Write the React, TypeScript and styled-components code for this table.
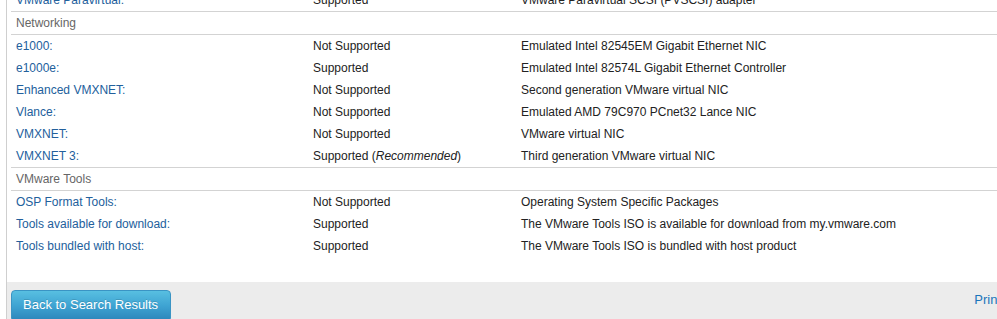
import React from "react";
import styled, { createGlobalStyle } from "styled-components";

const GlobalStyle = createGlobalStyle`
  html, body {
    margin: 0;
    padding: 0;
    background: #fff;
    overflow: hidden;
    font-family: "Liberation Sans", Arial, sans-serif;
  }
`;

const Page = styled.div`
  width: 1010px;
  height: 319px;
  padding-left: 6px;
  overflow: hidden;
`;

const Panel = styled.div`
  border-left: 1px solid #cfcfcf;
  background: #fff;
  display: flex;
  flex-direction: column;
  height: 100%;
`;

const Table = styled.div`
  margin: -11px 0 25px 4px;
  display: flex;
  flex-direction: column;
`;

const Row = styled.div`
  display: grid;
  grid-template-columns: 297px 208px 1fr;
  height: 22px;
  align-items: center;
  font-size: 12px;
  white-space: nowrap;
`;

const Label = styled.span`
  padding-left: 5px;
  color: #22609c;
`;

const Value = styled.span`
  padding-left: 5px;
  color: #222;
`;

const SectionRow = styled.div`
  height: 22px;
  display: flex;
  align-items: center;
  padding-left: 5px;
  font-size: 12px;
  color: #666;
  border-top: 1px solid #d3d3d3;
  border-bottom: 1px solid #d3d3d3;
`;

const Footer = styled.div`
  flex: 1;
  background: #ececec;
  display: flex;
  justify-content: space-between;
  align-items: flex-start;
  padding: 8px 15px 0 4px;
`;

const BackButton = styled.button`
  font-family: "Liberation Sans", Arial, sans-serif;
  font-size: 13px;
  color: #fff;
  height: 32px;
  padding: 0 12px 4px 11px;
  border: 1px solid #3a94c4;
  border-radius: 4px;
  background: linear-gradient(to bottom, #58bfe1 0%, #3ea3d2 50%, #2b84b9 100%);
  text-shadow: 0 -1px 0 rgba(0, 0, 0, 0.15);
  cursor: pointer;
`;

const PrintLink = styled.a`
  font-size: 13px;
  color: #1a75bb;
  margin-top: 2px;
  text-decoration: none;
`;

type Item = { label: string; support: React.ReactNode; desc: string };

const networking: Item[] = [
  { label: "e1000:", support: "Not Supported", desc: "Emulated Intel 82545EM Gigabit Ethernet NIC" },
  { label: "e1000e:", support: "Supported", desc: "Emulated Intel 82574L Gigabit Ethernet Controller" },
  { label: "Enhanced VMXNET:", support: "Not Supported", desc: "Second generation VMware virtual NIC" },
  { label: "Vlance:", support: "Not Supported", desc: "Emulated AMD 79C970 PCnet32 Lance NIC" },
  { label: "VMXNET:", support: "Not Supported", desc: "VMware virtual NIC" },
  {
    label: "VMXNET 3:",
    support: (
      <>
        Supported (<i>Recommended</i>)
      </>
    ),
    desc: "Third generation VMware virtual NIC",
  },
];

const tools: Item[] = [
  { label: "OSP Format Tools:", support: "Not Supported", desc: "Operating System Specific Packages" },
  {
    label: "Tools available for download:",
    support: "Supported",
    desc: "The VMware Tools ISO is available for download from my.vmware.com",
  },
  { label: "Tools bundled with host:", support: "Supported", desc: "The VMware Tools ISO is bundled with host product" },
];

const ItemRow = ({ item }: { item: Item }) => (
  <Row>
    <Label>{item.label}</Label>
    <Value>{item.support}</Value>
    <Value>{item.desc}</Value>
  </Row>
);

export default function App() {
  return (
    <>
      <GlobalStyle />
      <Page>
        <Panel>
          <Table>
            <ItemRow
              item={{
                label: "VMware Paravirtual:",
                support: "Supported",
                desc: "VMware Paravirtual SCSI (PVSCSI) adapter",
              }}
            />
            <SectionRow>Networking</SectionRow>
            {networking.map((it) => (
              <ItemRow key={it.label} item={it} />
            ))}
            <SectionRow>VMware Tools</SectionRow>
            {tools.map((it) => (
              <ItemRow key={it.label} item={it} />
            ))}
          </Table>
          <Footer>
            <BackButton>Back to Search Results</BackButton>
            <PrintLink href="#">Print</PrintLink>
          </Footer>
        </Panel>
      </Page>
    </>
  );
}
